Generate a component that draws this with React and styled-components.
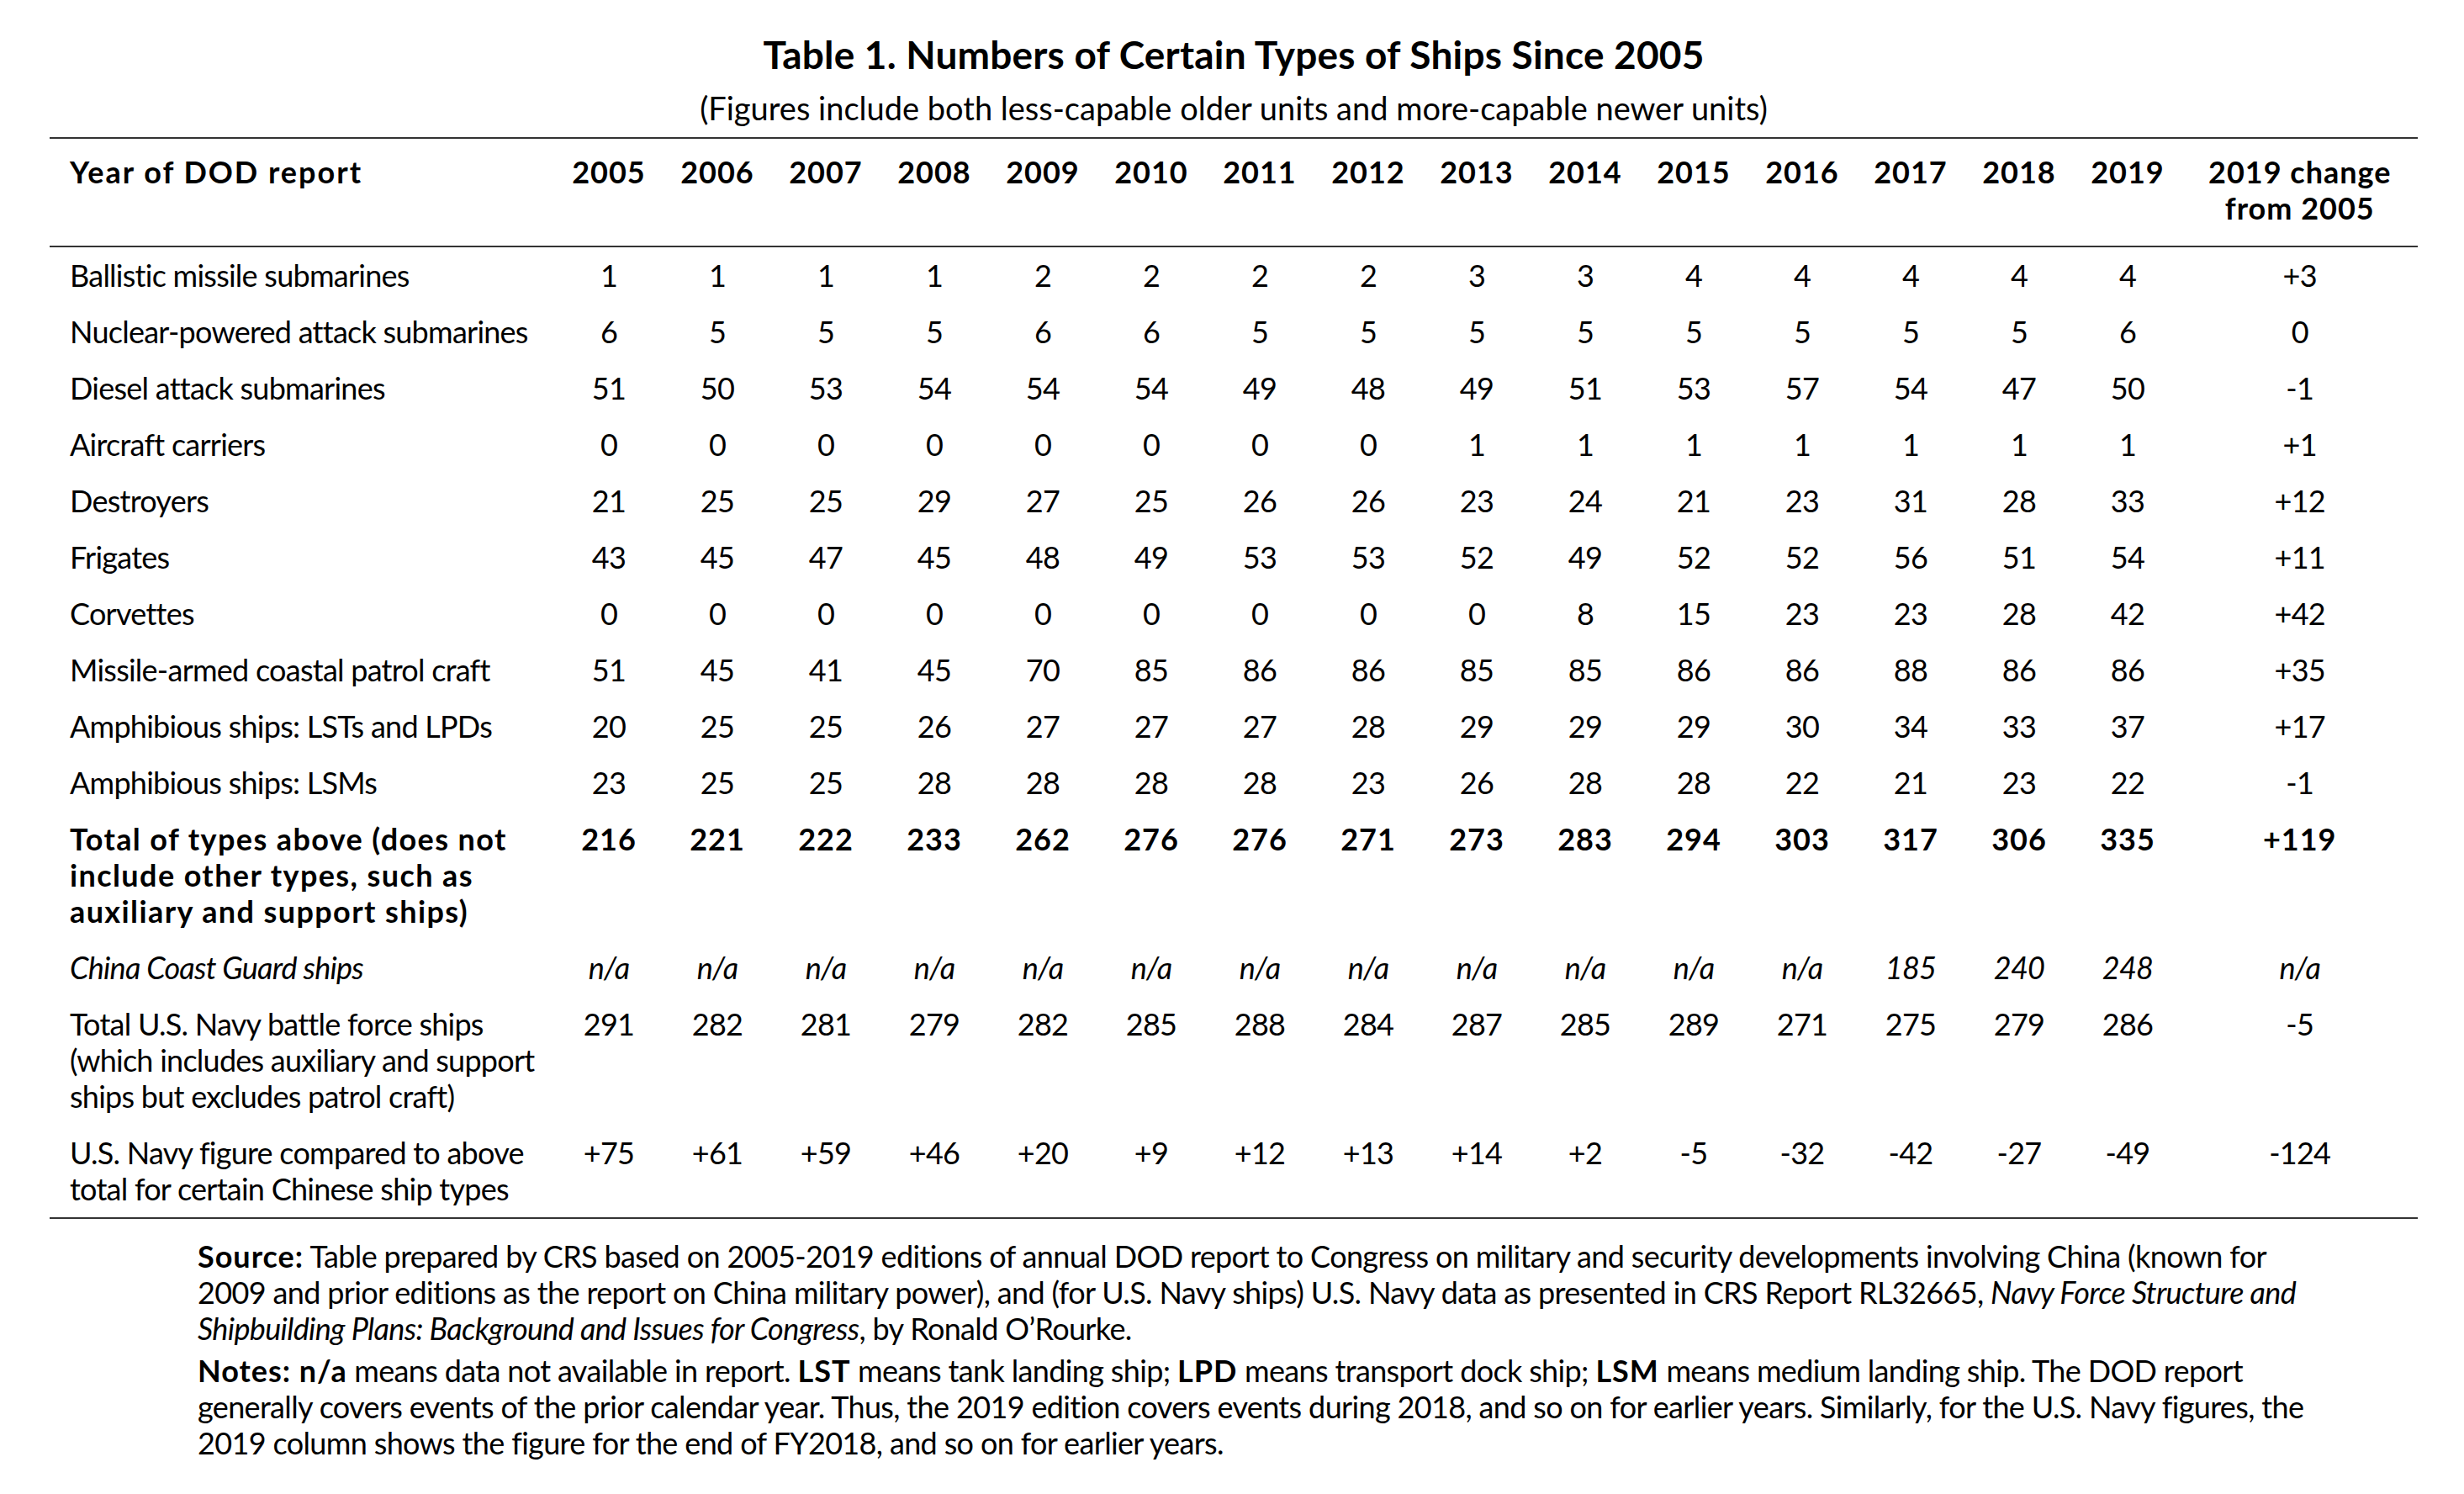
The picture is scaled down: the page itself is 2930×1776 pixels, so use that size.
import React from 'react';
import styled, { createGlobalStyle } from 'styled-components';

const GlobalStyle = createGlobalStyle`
  html, body {
    margin: 0;
    padding: 0;
    background: #ffffff;
  }
  body {
    font-family: Lato, "Open Sans", sans-serif;
    color: #000000;
  }
  b {
    letter-spacing: 1px;
  }
`;

const Page = styled.div`
  width: 2930px;
  height: 1776px;
  padding: 39px 0 0 59px;
  box-sizing: border-box;
`;

const Caption = styled.div`
  width: 2816px;
  text-align: center;
`;

const Title = styled.h1`
  margin: 0;
  font-size: 46px;
  line-height: 52px;
  font-weight: 700;
  letter-spacing: 0.2px;
`;

const Subtitle = styled.p`
  margin: 16px 0 0;
  font-size: 38px;
  line-height: 42px;
`;

const Table = styled.table`
  margin-top: 14px;
  width: 2816px;
  table-layout: fixed;
  border-collapse: separate;
  border-spacing: 0;
  border-top: 2px solid #333;
  border-bottom: 2px solid #333;
  font-size: 36px;
  line-height: 43px;
`;

const HeadCell = styled.th`
  padding: 18px 0 23px ${(p) => (p.$label ? '24px' : '0')};
  border-bottom: 2px solid #333;
  text-align: ${(p) => (p.$label ? 'left' : 'center')};
  vertical-align: top;
  font-weight: 700;
  letter-spacing: ${(p) => (p.$label ? '2px' : '1px')};
  white-space: nowrap;
`;

const Cell = styled.td`
  padding: 12px 0 12px ${(p) => (p.$label ? '24px' : '0')};
  text-align: ${(p) => (p.$label ? 'left' : 'center')};
  vertical-align: top;
  white-space: nowrap;
  font-weight: ${(p) => (p.$bold ? 700 : 400)};
  font-style: ${(p) => (p.$italic ? 'italic' : 'normal')};
  letter-spacing: ${(p) => (p.$bold ? (p.$label ? '1.4px' : '1px') : '-0.75px')};
`;

const Notes = styled.div`
  margin: 23px 0 0 176px;
  font-size: 36px;
  line-height: 43px;
  letter-spacing: -0.65px;
`;

const Para = styled.p`
  margin: 0;
  white-space: nowrap;
  & + & {
    margin-top: 7px;
  }
`;

const years = [2005, 2006, 2007, 2008, 2009, 2010, 2011, 2012, 2013, 2014, 2015, 2016, 2017, 2018, 2019];

const rows = [
  { label: ['Ballistic missile submarines'], values: '1 1 1 1 2 2 2 2 3 3 4 4 4 4 4', change: '+3' },
  { label: ['Nuclear-powered attack submarines'], values: '6 5 5 5 6 6 5 5 5 5 5 5 5 5 6', change: '0' },
  { label: ['Diesel attack submarines'], values: '51 50 53 54 54 54 49 48 49 51 53 57 54 47 50', change: '-1' },
  { label: ['Aircraft carriers'], values: '0 0 0 0 0 0 0 0 1 1 1 1 1 1 1', change: '+1' },
  { label: ['Destroyers'], values: '21 25 25 29 27 25 26 26 23 24 21 23 31 28 33', change: '+12' },
  { label: ['Frigates'], values: '43 45 47 45 48 49 53 53 52 49 52 52 56 51 54', change: '+11' },
  { label: ['Corvettes'], values: '0 0 0 0 0 0 0 0 0 8 15 23 23 28 42', change: '+42' },
  { label: ['Missile-armed coastal patrol craft'], values: '51 45 41 45 70 85 86 86 85 85 86 86 88 86 86', change: '+35' },
  { label: ['Amphibious ships: LSTs and LPDs'], values: '20 25 25 26 27 27 27 28 29 29 29 30 34 33 37', change: '+17' },
  { label: ['Amphibious ships: LSMs'], values: '23 25 25 28 28 28 28 23 26 28 28 22 21 23 22', change: '-1' },
  {
    label: ['Total of types above (does not', 'include other types, such as', 'auxiliary and support ships)'],
    values: '216 221 222 233 262 276 276 271 273 283 294 303 317 306 335',
    change: '+119',
    bold: true,
  },
  {
    label: ['China Coast Guard ships'],
    values: 'n/a n/a n/a n/a n/a n/a n/a n/a n/a n/a n/a n/a 185 240 248',
    change: 'n/a',
    italic: true,
  },
  {
    label: ['Total U.S. Navy battle force ships', '(which includes auxiliary and support', 'ships but excludes patrol craft)'],
    values: '291 282 281 279 282 285 288 284 287 285 289 271 275 279 286',
    change: '-5',
  },
  {
    label: ['U.S. Navy figure compared to above', 'total for certain Chinese ship types'],
    values: '+75 +61 +59 +46 +20 +9 +12 +13 +14 +2 -5 -32 -42 -27 -49',
    change: '-124',
  },
];

const Lines = ({ lines }) =>
  lines.map((line, i) => (
    <React.Fragment key={i}>
      {i > 0 && <br />}
      {line}
    </React.Fragment>
  ));

const App = () => {
  return (
    <Page>
      <GlobalStyle />
      <Caption>
        <Title>Table 1. Numbers of Certain Types of Ships Since 2005</Title>
        <Subtitle>(Figures include both less-capable older units and more-capable newer units)</Subtitle>
      </Caption>
      <Table>
        <colgroup>
          <col style={{ width: '600.5px' }} />
          {years.map((y) => (
            <col key={y} style={{ width: '129px' }} />
          ))}
          <col style={{ width: '280.5px' }} />
        </colgroup>
        <thead>
          <tr>
            <HeadCell $label>Year of DOD report</HeadCell>
            {years.map((y) => (
              <HeadCell key={y}>{y}</HeadCell>
            ))}
            <HeadCell>
              2019 change
              <br />
              from 2005
            </HeadCell>
          </tr>
        </thead>
        <tbody>
          {rows.map((row) => (
            <tr key={row.label[0]}>
              <Cell $label $bold={row.bold} $italic={row.italic}>
                <Lines lines={row.label} />
              </Cell>
              {row.values.split(' ').map((v, i) => (
                <Cell key={i} $bold={row.bold} $italic={row.italic}>
                  {v}
                </Cell>
              ))}
              <Cell $bold={row.bold} $italic={row.italic}>
                {row.change}
              </Cell>
            </tr>
          ))}
        </tbody>
      </Table>
      <Notes>
        <Para>
          <b>Source:</b> Table prepared by CRS based on 2005-2019 editions of annual DOD report to Congress on military and
          security developments involving China (known for
          <br />
          2009 and prior editions as the report on China military power), and (for U.S. Navy ships) U.S. Navy data as
          presented in CRS Report RL32665, <i>Navy Force Structure and</i>
          <br />
          <i>Shipbuilding Plans: Background and Issues for Congress</i>, by Ronald O’Rourke.
        </Para>
        <Para>
          <b>Notes: n/a</b> means data not available in report. <b>LST</b> means tank landing ship; <b>LPD</b> means
          transport dock ship; <b>LSM</b> means medium landing ship. The DOD report
          <br />
          generally covers events of the prior calendar year. Thus, the 2019 edition covers events during 2018, and so on
          for earlier years. Similarly, for the U.S. Navy figures, the
          <br />
          2019 column shows the figure for the end of FY2018, and so on for earlier years.
        </Para>
      </Notes>
    </Page>
  );
};

export default App;
